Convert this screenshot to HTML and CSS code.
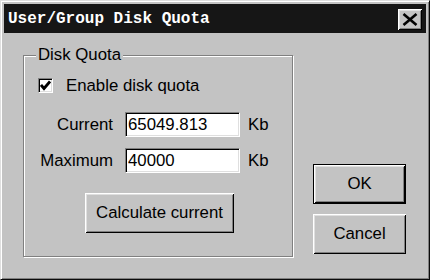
FILE: index.html
```html
<!DOCTYPE html>
<html lang="en">
<head>
 <meta charset="UTF-8">
 <title>User/Group Disk Quota</title>
 <link rel="stylesheet" href="styles.css">
</head>
<body>
 <div class="window">
  <div class="title-bar">
   <span class="title">User/Group Disk Quota</span>
   <button class="close-btn" aria-label="Close">
    <svg width="16" height="13" viewBox="0 0 16 13"><path d="M1.5 1 L14.5 12 M14.5 1 L1.5 12" stroke="#000" stroke-width="2.6" fill="none"/></svg>
   </button>
  </div>

  <div class="window-body">
   <fieldset class="group">
    <legend>Disk Quota</legend>

    <label class="check-row">
     <span class="checkbox">
      <svg width="11" height="11" viewBox="0 0 11 11"><path d="M1 5 L4 8.5 L10 1.5" stroke="#000" stroke-width="2.8" fill="none"/></svg>
     </span>
     Enable disk quota
    </label>

    <div class="fields">
     <span class="field-label">Current</span>
     <input class="field" type="text" value="65049.813">
     <span class="unit">Kb</span>

     <span class="field-label">Maximum</span>
     <input class="field" type="text" value="40000">
     <span class="unit">Kb</span>
    </div>

    <button class="btn calc-btn">Calculate current</button>
   </fieldset>

   <div class="actions">
    <button class="btn default-btn">OK</button>
    <button class="btn">Cancel</button>
   </div>
  </div>
 </div>
</body>
</html>
```

FILE: styles.css
```css
body {
 margin: 0;
 font-family: "Liberation Sans", Arial, sans-serif;
 font-size: 16.8px;
 color: #000;
 background-color: #c3c3c3;
}

.window {
 width: 430px;
 height: 280px;
 box-sizing: border-box;
 background-color: #c3c3c3;
 border: 1px solid;
 border-color: #dfdfdf #0a0a0a #0a0a0a #dfdfdf;
 box-shadow: inset 1px 1px 0 #fff, inset -1px -1px 0 #808080;
 padding: 3px;
 display: flex;
 flex-direction: column;
}

.title-bar {
 height: 29px;
 background-color: #161616;
 display: flex;
 align-items: center;
 justify-content: space-between;
 padding: 0 4px;
}

.title {
 font-family: "Liberation Mono", "DejaVu Sans Mono", monospace;
 font-weight: bold;
 font-size: 16px;
 color: #fff;
}

.close-btn {
 width: 24px;
 height: 21px;
 padding: 0;
 border: none;
 background-color: #c3c3c3;
 box-shadow: inset 1px 1px 0 #fff, inset -1px -1px 0 #000, inset 2px 2px 0 #dfdfdf, inset -2px -2px 0 #808080;
 display: flex;
 align-items: center;
 justify-content: center;
 margin-top: 1px;
}

.window-body {
 display: flex;
 align-items: flex-start;
}

.group {
 width: 270px;
 height: 211px;
 box-sizing: border-box;
 margin: 13px 0 0 19px;
 padding: 0;
 border: 1px solid #808080;
 box-shadow: 1px 1px 0 #fff, inset 1px 1px 0 #fff;
}

.group legend {
 margin-left: 12px;
 padding: 0 2px;
 line-height: 18px;
 background-color: #c3c3c3;
}

.check-row {
 display: flex;
 align-items: center;
 margin: 14px 0 0 14px;
 height: 15px;
}

.checkbox {
 width: 15px;
 height: 15px;
 box-sizing: border-box;
 background-color: #fff;
 border: 1px solid;
 border-color: #808080 #fff #fff #808080;
 box-shadow: inset 1px 1px 0 #000, inset -1px -1px 0 #dfdfdf;
 display: flex;
 align-items: center;
 justify-content: center;
 margin-right: 13px;
}

.fields {
 display: grid;
 grid-template-columns: 73px 115px auto;
 grid-auto-rows: 25px;
 row-gap: 11px;
 align-items: center;
 margin: 19px 0 0 16px;
}

.field-label {
 text-align: right;
}

.field {
 width: 115px;
 height: 25px;
 box-sizing: border-box;
 margin-left: 12px;
 padding: 0 2px;
 font: inherit;
 background-color: #fff;
 border: 1px solid;
 border-color: #808080 #fff #fff #808080;
 box-shadow: inset 1px 1px 0 #000, inset -1px -1px 0 #dfdfdf;
 outline: none;
}

.unit {
 margin-left: 20px;
}

.btn {
 font: inherit;
 color: #000;
 background-color: #c3c3c3;
 border: none;
 padding: 0;
 box-shadow: inset 1px 1px 0 #fff, inset -1px -1px 0 #000, inset 2px 2px 0 #dfdfdf, inset -2px -2px 0 #808080;
}

.calc-btn {
 display: block;
 width: 149px;
 height: 40px;
 margin: 20px 0 0 61px;
}

.actions {
 display: flex;
 flex-direction: column;
 gap: 10px;
 margin: 131px 0 0 20px;
}

.actions .btn {
 width: 93px;
 height: 40px;
}

.default-btn {
 border: 1px solid #000;
}
```
